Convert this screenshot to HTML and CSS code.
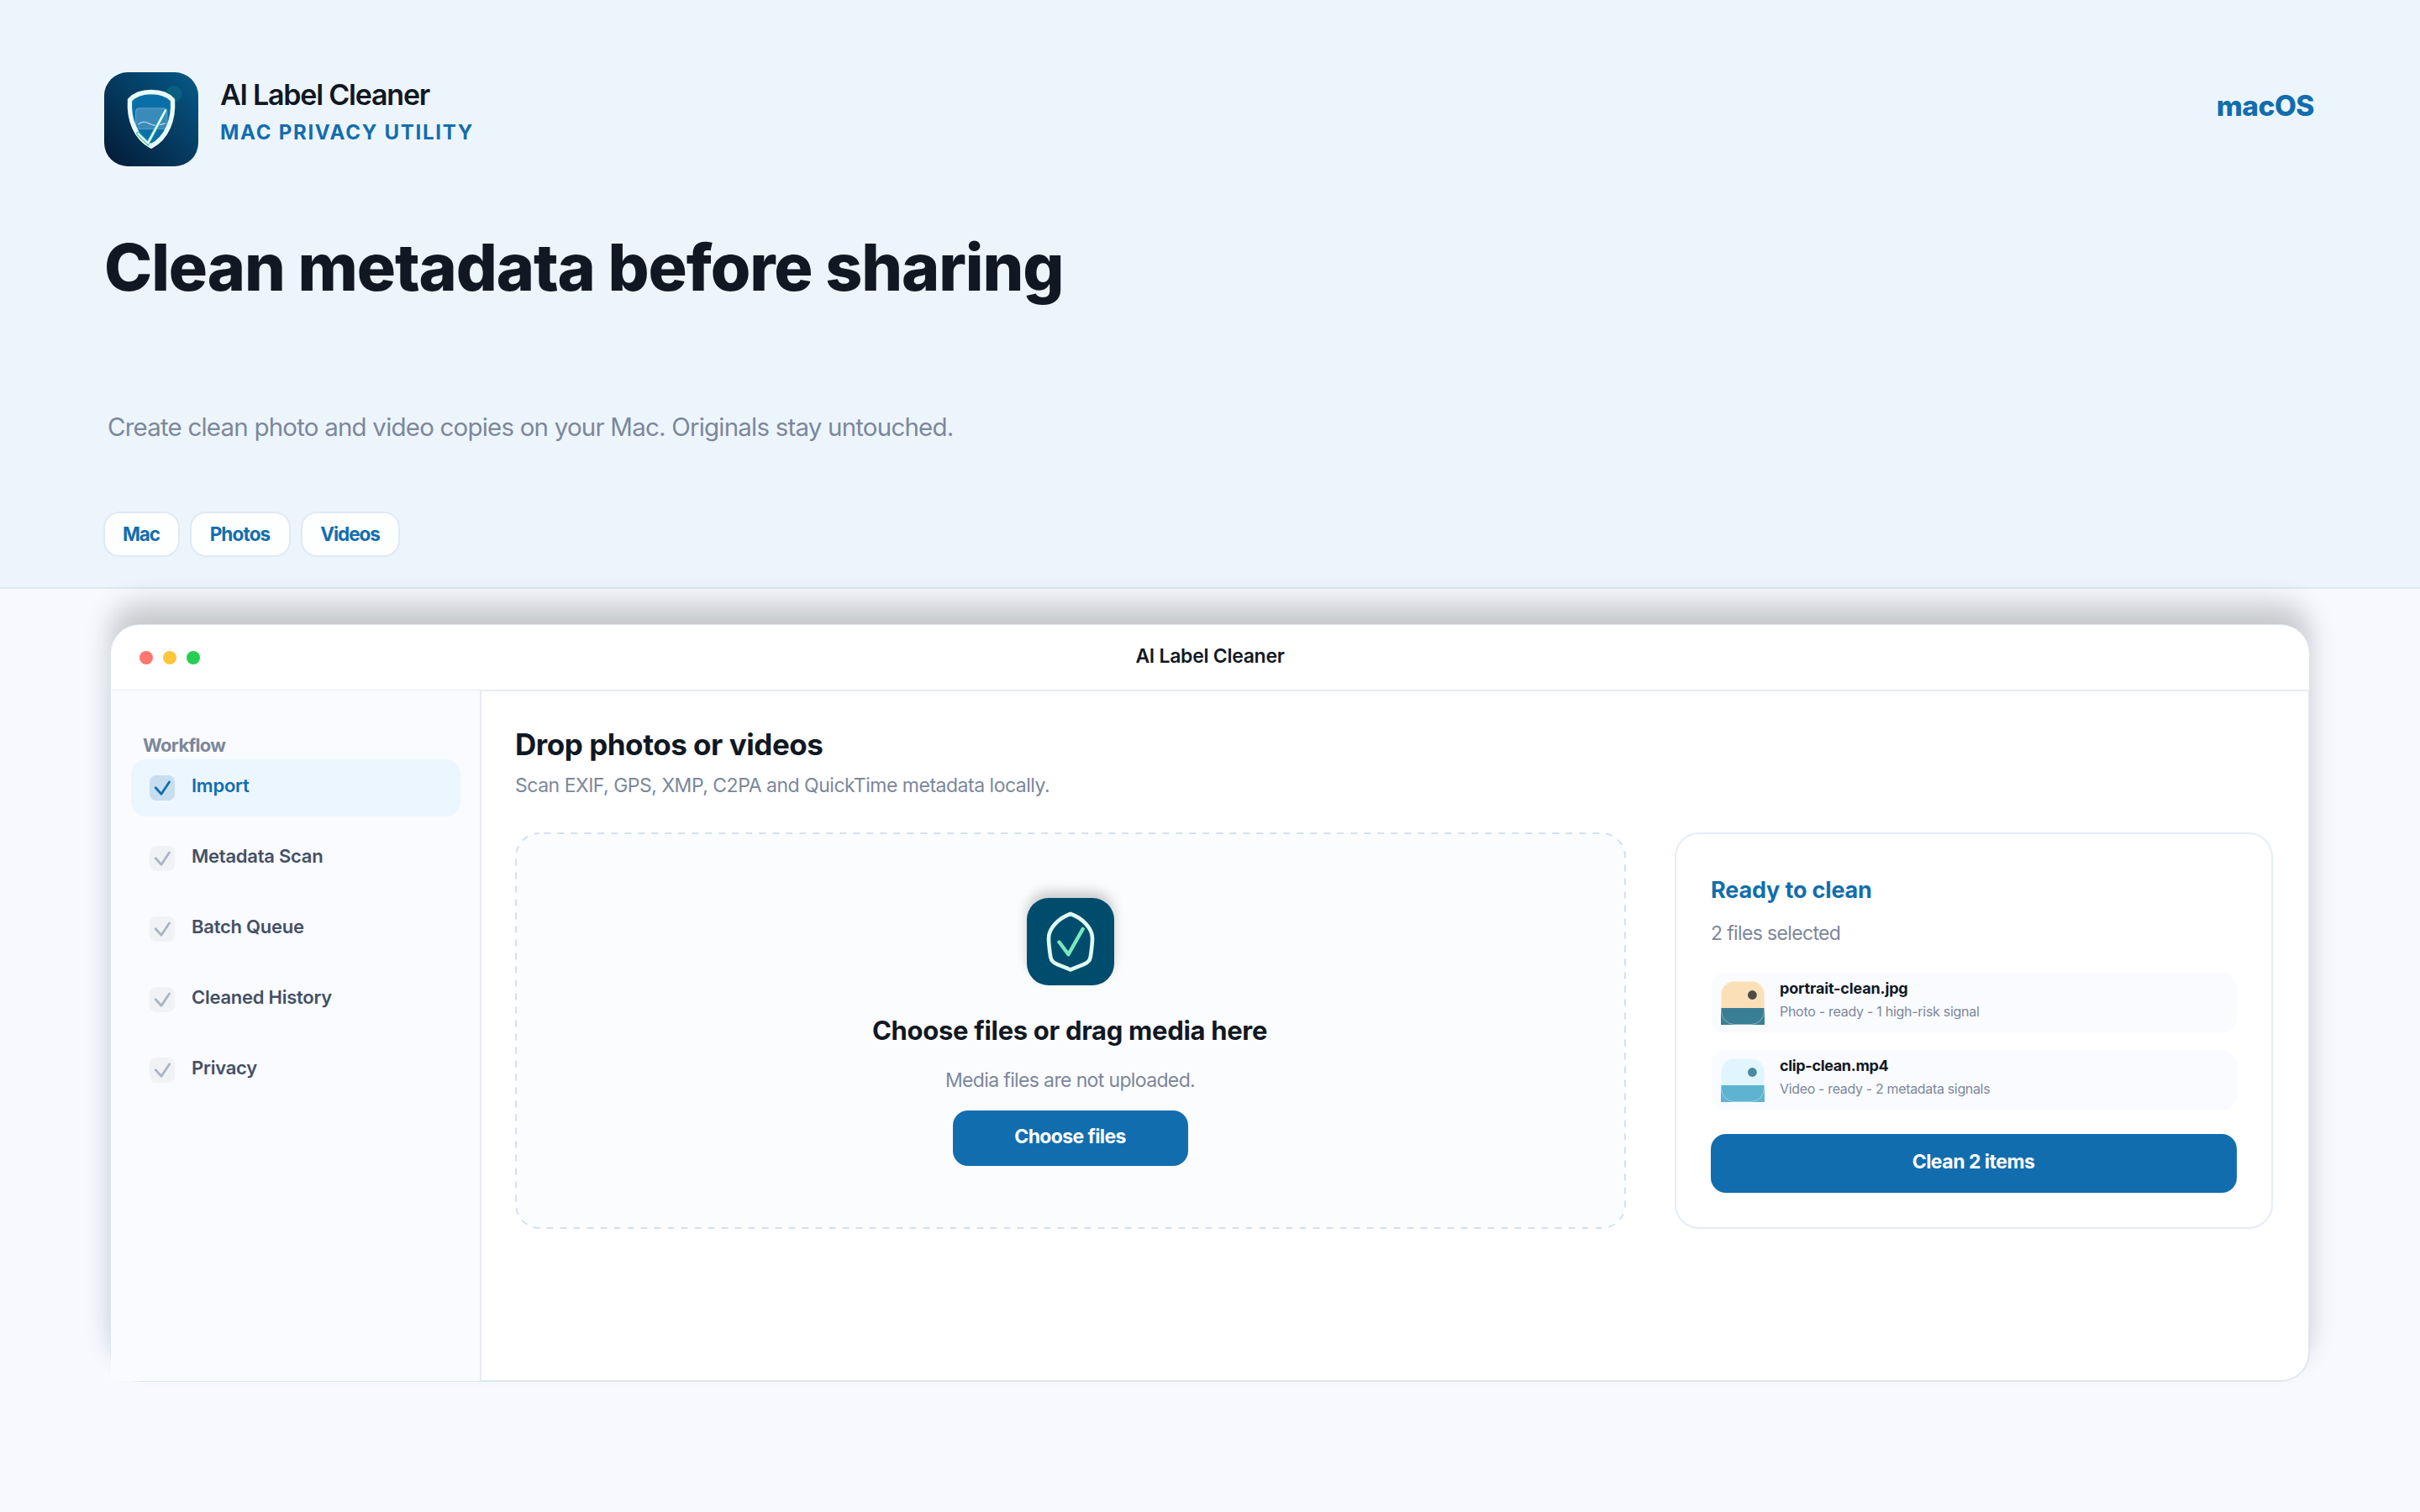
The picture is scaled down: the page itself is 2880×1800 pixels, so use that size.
FILE: index.html
```html
<!DOCTYPE html>
<html lang="en">
<head>
<meta charset="utf-8">
<title>AI Label Cleaner</title>
<link rel="stylesheet" href="styles.css">
</head>
<body>
<header class="hero">
  <div class="brand-row">
    <svg class="logo" viewBox="0 0 112 112" aria-hidden="true">
      <defs>
        <linearGradient id="logo-bg" x1="0" y1="1" x2="1" y2="0">
          <stop offset="0" stop-color="#041a35"/>
          <stop offset="1" stop-color="#065a8a"/>
        </linearGradient>
      </defs>
      <rect width="112" height="112" rx="28" fill="url(#logo-bg)"/>
      <circle cx="82.5" cy="26" r="10" fill="#0b7a86" opacity=".45"/>
      <path d="M56 24.5C46 24.5 36 28 30.5 34C29 57 37 79 56 89C75 79 83 57 81.5 34C76 28 66 24.5 56 24.5Z" fill="none" stroke="#03182c" stroke-opacity=".45" stroke-width="6"/>
      <path d="M56 23.5C46 23.5 36 27 30.5 33C29 56 37 78 56 88C75 78 83 56 81.5 33C76 27 66 23.5 56 23.5Z" fill="#0a6fa9" stroke="#e9fbf6" stroke-width="5.4"/>
      <rect x="37.5" y="42.8" width="37.4" height="24.8" rx="4" fill="#fff" fill-opacity=".2" stroke="#fff" stroke-opacity=".28"/>
      <path d="M41 61.8Q46 57 52.5 60.6T64 63T72 61" fill="none" stroke="#cfe4f2" stroke-opacity=".8" stroke-width="1.3" stroke-linecap="round"/>
      <path d="M40.3 73L52 84.4L73 45.4" fill="none" stroke="#12b89c" stroke-width="4.2" stroke-linecap="round"/>
      <path d="M40.3 73L52 84.4L73 45.4" fill="none" stroke="#fff" stroke-width="2.4" stroke-linecap="round"/>
    </svg>
    <div class="brand-text">
      <div class="brand-name">AI Label Cleaner</div>
      <div class="brand-tag">MAC PRIVACY UTILITY</div>
    </div>
    <div class="platform">macOS</div>
  </div>
  <h1 class="headline">Clean metadata before sharing</h1>
  <p class="subhead">Create clean photo and video copies on your Mac. Originals stay untouched.</p>
  <div class="chips">
    <span class="chip chip-mac">Mac</span>
    <span class="chip chip-photos">Photos</span>
    <span class="chip chip-videos">Videos</span>
  </div>
</header>

<section class="window">
  <div class="titlebar">
    <div class="lights"><i class="light red"></i><i class="light yellow"></i><i class="light green"></i></div>
    <div class="window-title">AI Label Cleaner</div>
  </div>
  <div class="window-body">
    <nav class="sidebar">
      <div class="sidebar-label">Workflow</div>
      <div class="nav">
        <div class="nav-item active"><svg class="check" viewBox="0 0 30 30"><path d="M7.2 14.7L14 22.3L23.5 7.9"/></svg><span>Import</span></div>
        <div class="nav-item"><svg class="check" viewBox="0 0 30 30"><path d="M7.2 14.7L14 22.3L23.5 7.9"/></svg><span>Metadata Scan</span></div>
        <div class="nav-item"><svg class="check" viewBox="0 0 30 30"><path d="M7.2 14.7L14 22.3L23.5 7.9"/></svg><span>Batch Queue</span></div>
        <div class="nav-item"><svg class="check" viewBox="0 0 30 30"><path d="M7.2 14.7L14 22.3L23.5 7.9"/></svg><span>Cleaned History</span></div>
        <div class="nav-item"><svg class="check" viewBox="0 0 30 30"><path d="M7.2 14.7L14 22.3L23.5 7.9"/></svg><span>Privacy</span></div>
      </div>
    </nav>
    <main class="main">
      <h2 class="main-title">Drop photos or videos</h2>
      <p class="main-sub">Scan EXIF, GPS, XMP, C2PA and QuickTime metadata locally.</p>
      <div class="panels">
        <div class="dropzone">
          <svg class="drop-outline" viewBox="0 0 1322 472" aria-hidden="true"><rect x="1" y="1" width="1320" height="470" rx="28"/></svg>
          <svg class="drop-icon" viewBox="0 0 104 104" aria-hidden="true">
            <path class="drop-shield" d="M52 19C39 23.5 26 35 26 48C26 54 27 61 27.6 66C28.6 75 30.5 76.5 36.5 79.2L52 85.4L67.5 79.2C73.5 76.5 75.4 75 76.4 66C77 61 78 54 78 48C78 35 65 23.5 52 19Z"/>
            <path class="drop-check" d="M38.5 52.5L49.5 67.2L66.6 37"/>
          </svg>
          <div class="drop-title">Choose files or drag media here</div>
          <div class="drop-sub">Media files are not uploaded.</div>
          <button class="btn btn-choose">Choose files</button>
        </div>
        <aside class="ready">
          <div class="ready-title">Ready to clean</div>
          <div class="ready-sub">2 files selected</div>
          <div class="files">
            <div class="file">
              <svg class="thumb" viewBox="0 0 52 52"><rect width="52" height="52" rx="16" fill="#fbdfb7"/><rect y="32" width="52" height="20" fill="#3a7e94"/><circle cx="37.4" cy="16.5" r="5.4" fill="#4f4c48"/><rect x=".5" y=".5" width="51" height="51" rx="15.5" fill="none" stroke="#fff" stroke-opacity=".4"/></svg>
              <div class="file-text"><div class="file-name">portrait-clean.jpg</div><div class="file-meta">Photo - ready - 1 high-risk signal</div></div>
            </div>
            <div class="file video">
              <svg class="thumb" viewBox="0 0 52 52"><rect width="52" height="52" rx="16" fill="#e1f5ff"/><rect y="32" width="52" height="20" fill="#5eb3d1"/><circle cx="37.4" cy="16.5" r="5.4" fill="#4b8a9f"/><rect x=".5" y=".5" width="51" height="51" rx="15.5" fill="none" stroke="#fff" stroke-opacity=".4"/></svg>
              <div class="file-text"><div class="file-name">clip-clean.mp4</div><div class="file-meta">Video - ready - 2 metadata signals</div></div>
            </div>
          </div>
          <button class="btn btn-clean">Clean 2 items</button>
        </aside>
      </div>
    </main>
  </div>
</section>
</body>
</html>
```
FILE: styles.css
```css
* { box-sizing: border-box; }

body {
  margin: 0;
  min-height: 1800px;
  background: #f8f9fe;
  color: #111823;
  font-family: Inter, "Liberation Sans", sans-serif;
}

h1, h2, p { margin: 0; }

svg { display: block; flex: none; }

/* Hero */
.hero {
  height: 701px;
  padding: 86px 126px 0 124px;
  background: #edf5fc;
  border-bottom: 2px solid #dce8f0;
}

.brand-row { display: flex; height: 112px; }
.logo { width: 112px; height: 112px; }
.brand-text { flex: 1; padding: 7px 0 0 26px; }
.brand-name { font-size: 34px; font-weight: 600; line-height: 40px; letter-spacing: -1.22px; }
.brand-tag { margin-top: 10px; color: #126dae; font-size: 24px; font-weight: 700; line-height: 30px; letter-spacing: 1.73px; }
.platform { margin-top: 20px; color: #126dae; font-size: 33.5px; font-weight: 800; line-height: 40px; letter-spacing: -.5px; }

.headline { margin: 75px 0 0 0; font-size: 77px; font-weight: 800; line-height: 90px; letter-spacing: -1.11px; white-space: nowrap; }
.subhead { margin-top: 125px; padding-left: 4px; color: #7c879b; font-size: 29.5px; line-height: 40px; letter-spacing: -.8px; }

.chips { display: flex; gap: 12px; margin: 81px 0 0 -1px; }
.chip {
  display: flex;
  align-items: center;
  justify-content: center;
  height: 54px;
  padding: 0 1px 1px 0;
  border: 2px solid #e0eaf3;
  border-radius: 19px;
  background: #fdfefe;
  color: #126dae;
  font-size: 22.5px;
  font-weight: 700;
  letter-spacing: -1.05px;
}
.chip-mac { width: 91px; }
.chip-photos { width: 120px; letter-spacing: -.85px; }
.chip-videos { width: 118px; }

/* App window */
.window {
  display: flex;
  flex-direction: column;
  width: 2616px;
  height: 900px;
  margin: 43px 0 0 132px;
  border-radius: 34px;
  background: #fff;
  box-shadow: 0 0 0 1px #dde5ed, 0 -25px 33px rgba(0, 0, 0, .2);
}

.titlebar {
  display: grid;
  grid-template-columns: 1fr auto 1fr;
  align-items: center;
  height: 79px;
  padding: 1px 34px 0;
  border-bottom: 2px solid #e7ebf1;
}
.lights { display: flex; gap: 12px; }
.light { width: 16px; height: 16px; border-radius: 50%; }
.red { background: #ff776d; }
.yellow { background: #ffc63c; }
.green { background: #26cf53; }
.window-title { padding-bottom: 4.8px; font-size: 23px; font-weight: 600; letter-spacing: -.28px; }

.window-body { display: flex; flex: 1; }

.sidebar {
  width: 441px;
  margin-top: -1px;
  padding: 51px 23px 0 24px;
  border-right: 2px solid #e9ecf4;
  background: #fafbfe;
}
.sidebar-label { padding-left: 14px; color: #7c879b; font-size: 22px; font-weight: 700; line-height: 28px; letter-spacing: -.7px; }
.nav { display: flex; flex-direction: column; gap: 16px; margin-top: 3px; }
.nav-item {
  display: flex;
  align-items: center;
  gap: 20px;
  height: 68px;
  padding-left: 22px;
  border-radius: 18px;
  color: #435066;
  font-size: 22px;
  font-weight: 600;
  letter-spacing: -.25px;
}
.nav-item span { padding-bottom: 6px; }
.nav-item.active { background: #ebf6ff; color: #126dae; }
.check { width: 30px; height: 30px; border-radius: 8px; background: #f1f2f6; }
.check path { fill: none; stroke: #abb4c3; stroke-width: 2.8; stroke-linecap: round; stroke-linejoin: round; }
.active .check { background: #c7ddf0; }
.active .check path { stroke: #126dae; }

.main {
  flex: 1;
  padding: 41.5px 42px 0 40px;
  border: solid #dde5ed;
  border-width: 0 1px 1px 0;
  border-radius: 0 0 33px 0;
}
.main-title { font-size: 35px; font-weight: 700; line-height: 42px; letter-spacing: -.46px; }
.main-sub { margin-top: 13.1px; color: #7c879b; font-size: 23px; line-height: 30px; letter-spacing: -.49px; }
.panels { display: flex; gap: 58px; margin-top: 41.4px; }

.btn {
  padding: 0 1px 4px 0;
  border: 0;
  border-radius: 18px;
  background: #126dae;
  color: #fff;
  font: 700 23px Inter, "Liberation Sans", sans-serif;
}

/* Drop zone */
.dropzone {
  position: relative;
  display: flex;
  flex-direction: column;
  align-items: center;
  width: 1322px;
  height: 472px;
  padding-top: 78px;
}
.drop-outline { position: absolute; inset: 0; z-index: 0; }
.drop-outline rect { fill: #fbfcfe; stroke: #d3e1ed; stroke-width: 2; stroke-dasharray: 8 8; stroke-dashoffset: -5.3; }
.dropzone > :not(.drop-outline) { z-index: 1; }
.drop-icon { width: 104px; height: 104px; border-radius: 26px; background: #004c6d; box-shadow: 0 -8px 14px rgba(0, 0, 0, .19); }
.drop-shield { fill: none; stroke: #e0fcf0; stroke-width: 4.6; stroke-linejoin: round; }
.drop-check { fill: none; stroke: #7ae8bf; stroke-width: 4.4; stroke-linecap: round; stroke-linejoin: round; }
.drop-title { margin-top: 34.7px; padding-right: 2px; font-size: 31px; font-weight: 700; line-height: 38px; letter-spacing: -.31px; }
.drop-sub { margin-top: 24.9px; padding-right: 1px; color: #7c879b; font-size: 23px; line-height: 30px; letter-spacing: -.64px; }
.btn-choose { width: 280px; height: 66px; margin-top: 21.4px; letter-spacing: -.62px; }

/* Ready card */
.ready {
  display: flex;
  flex-direction: column;
  width: 712px;
  height: 472px;
  padding: 50px 41px 0;
  border: 2px solid #e7edf4;
  border-radius: 29px;
}
.ready-title { color: #126dae; font-size: 27px; font-weight: 700; line-height: 34px; letter-spacing: -.16px; }
.ready-sub { margin-top: 18.6px; color: #7c879b; font-size: 23px; line-height: 30px; letter-spacing: -.65px; }
.files { display: flex; flex-direction: column; gap: 20px; margin-top: 32.4px; }
.file { display: flex; gap: 18px; height: 72px; padding-left: 12px; border-radius: 18px; background: #fafbfe; }
.thumb { width: 52px; height: 52px; margin-top: 10px; }
.file-text { padding-top: 8px; }
.file-name { font-size: 18px; font-weight: 700; line-height: 22px; letter-spacing: -.16px; }
.file-meta { margin-top: 6.2px; color: #7c879b; font-size: 16px; line-height: 20px; letter-spacing: -.28px; }
.video .file-name, .video .file-meta { letter-spacing: -.34px; }
.btn-clean { height: 70px; margin-top: 28px; letter-spacing: -.5px; }
```
